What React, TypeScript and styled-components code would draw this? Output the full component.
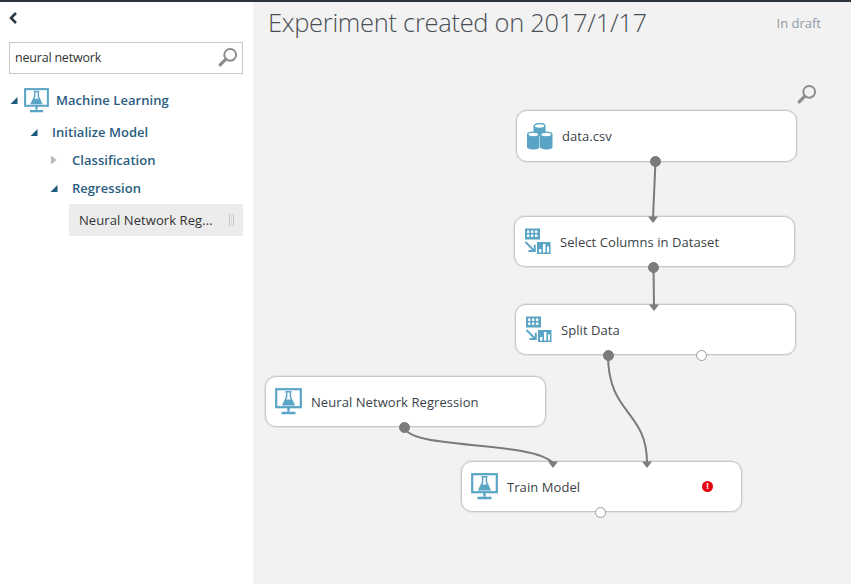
import React from "react";
import styled, { createGlobalStyle } from "styled-components";

const Global = createGlobalStyle`
  html, body { margin: 0; padding: 0; height: 100%; background: #fff; }
  #root { height: 100%; }
  * { box-sizing: border-box; }
`;

const FONT = `"Open Sans", "Noto Sans", "Liberation Sans", sans-serif`;
const BLUE = "#5aa5c6";

const Page = styled.div`
  width: 851px;
  height: 584px;
  display: flex;
  flex-direction: column;
  overflow: hidden;
  font-family: ${FONT};
`;
const TopBar = styled.div`
  height: 2px;
  flex: none;
  background: #2e343e;
`;
const Body = styled.div`
  flex: 1;
  display: flex;
  min-height: 0;
`;
const Sidebar = styled.aside`
  width: 253px;
  flex: none;
  background: #fff;
  padding: 8px 10px 0 8px;
  display: flex;
  flex-direction: column;
`;
const Back = styled.div`
  height: 32px;
  display: flex;
  align-items: flex-start;
  padding: 1px 0 0 0;
`;
const Search = styled.div`
  height: 32px;
  margin-left: 1px;
  border: 1px solid #c8c8c8;
  display: flex;
  align-items: center;
  justify-content: space-between;
  padding: 0 4px 2px 5px;
  font-size: 12.5px;
  color: #333;
  letter-spacing: -0.2px;
`;
const Tree = styled.div`
  margin-top: 9px;
  margin-left: 1px;
  display: flex;
  flex-direction: column;
`;
const TreeRow = styled.div<{ $indent: number; $h: number }>`
  height: ${(p) => p.$h}px;
  display: flex;
  align-items: center;
  padding-left: ${(p) => p.$indent}px;
  color: #2a5d7f;
  font-size: 13px;
  font-weight: 600;
  letter-spacing: 0.04px;
`;
const Twist = styled.svg`
  width: 8px;
  height: 10px;
  flex: none;
`;
const RowLabel = styled.span<{ $gap: number }>`
  margin-left: ${(p) => p.$gap}px;
`;
const RowIcon = styled.span`
  margin-left: 6px;
  display: flex;
  line-height: 0;
`;
const Leaf = styled.div`
  height: 32px;
  margin: 1px 0 0 60px;
  background: #ececec;
  display: flex;
  align-items: center;
  justify-content: space-between;
  padding: 0 9px 0 10px;
  color: #333;
  font-size: 13px;
  letter-spacing: 0.08px;
`;
const Grip = styled.div`
  width: 5px;
  height: 12px;
  border-left: 1px solid #c4c4c4;
  border-right: 1px solid #c4c4c4;
  position: relative;
  &::after {
    content: "";
    position: absolute;
    left: 1px;
    top: 0;
    bottom: 0;
    width: 1px;
    background: #dcdcdc;
  }
`;
const Canvas = styled.main`
  flex: 1;
  position: relative;
  background: #f2f2f2;
  border-left: 1px solid #f7f7f7;
`;
const Header = styled.header`
  display: flex;
  justify-content: space-between;
  align-items: flex-start;
  padding: 1px 30px 0 14px;
`;
const Title = styled.h1`
  margin: 0;
  font-size: 25.5px;
  line-height: 38px;
  font-weight: 300;
  color: #4a4f55;
  letter-spacing: -0.3px;
`;
const Status = styled.div`
  font-size: 13px;
  line-height: 18px;
  margin-top: 11px;
  color: #8f9aa6;
  letter-spacing: 0;
`;
const ZoomIcon = styled.div`
  position: absolute;
  left: 543px;
  top: 82px;
  line-height: 0;
`;
const Wires = styled.svg`
  position: absolute;
  left: -254px;
  top: -2px;
  width: 851px;
  height: 584px;
  pointer-events: none;
`;
const Node = styled.div<{ $x: number; $y: number; $h: number }>`
  position: absolute;
  left: ${(p) => p.$x - 254}px;
  top: ${(p) => p.$y - 2}px;
  width: 281px;
  height: ${(p) => p.$h}px;
  background: #fff;
  border: 1px solid #c8c8c8;
  box-shadow: 0 0 0 1px rgba(200, 200, 200, 0.35);
  border-radius: 11px;
  display: flex;
  align-items: center;
  padding-left: 9px;
  font-size: 13px;
  color: #3a3f47;
  letter-spacing: 0.07px;
`;
const NodeIcon = styled.div`
  width: 27px;
  height: 27px;
  flex: none;
  line-height: 0;
`;
const NodeLabel = styled.span<{ $gap: number }>`
  margin-left: ${(p) => p.$gap}px;
`;
const Port = styled.div<{ $x: number; $y: number; $open?: boolean }>`
  position: absolute;
  left: ${(p) => p.$x - 254 - 5.5}px;
  top: ${(p) => p.$y - 2 - 5.5}px;
  width: 11px;
  height: 11px;
  border-radius: 50%;
  background: ${(p) => (p.$open ? "#fff" : "#7b7b7b")};
  border: 1px solid ${(p) => (p.$open ? "#9a9a9a" : "#7b7b7b")};
`;
const Alert = styled.div`
  position: absolute;
  left: 240px;
  top: 19px;
  width: 11px;
  height: 11px;
  border-radius: 50%;
  background: #e60012;
  color: #fff;
  font: 700 9px/11px "Liberation Sans", sans-serif;
  text-align: center;
`;

const Magnifier = ({ size, color }: { size: number; color: string }) => (
  <svg width={size} height={size} viewBox="0 0 20 20" fill="none">
    <circle cx="12.2" cy="7.8" r="5.9" stroke={color} strokeWidth="2" />
    <path d="M7.6 12.4 2.2 17.8" stroke={color} strokeWidth="3.2" strokeLinecap="round" />
  </svg>
);

const Open = () => (
  <Twist viewBox="0 0 8 10">
    <path d="M7.5 2v7H.5z" fill="#1f5b7e" />
  </Twist>
);
const Closed = () => (
  <Twist viewBox="0 0 8 10">
    <path d="M1 .5 6.5 5 1 9.5z" fill="#b9b9b9" />
  </Twist>
);

const Flask = ({ size = 27 }: { size?: number }) => (
  <svg width={size} height={size} viewBox="0 0 27 27" fill="none">
    <rect x="1.2" y="1.2" width="24.6" height="18" stroke={BLUE} strokeWidth="2.2" />
    <path d="M13.5 19v4.5M6.5 25h14" stroke={BLUE} strokeWidth="2.4" />
    <path d="M10.5 3.8h6M11.6 4v5L8 16.8h11L15.4 9V4" stroke={BLUE} strokeWidth="1.5" />
    <path d="M10.6 11.5h5.8l2.2 5.3H8.4z" fill={BLUE} />
  </svg>
);

const Cyl = ({ x, y, w, h }: { x: number; y: number; w: number; h: number }) => (
  <g>
    <path
      d={`M${x} ${y + 2.5}v${h - 5}c0 1.6 2.5 2.5 ${w / 2} 2.5s${w / 2}-.9 ${w / 2}-2.5V${y + 2.5}z`}
      fill={BLUE}
    />
    <ellipse cx={x + w / 2} cy={y + 2.5} rx={w / 2 - 0.7} ry="2.4" fill="#fff" stroke={BLUE} strokeWidth="1.4" />
  </g>
);
const Database = () => (
  <svg width="27" height="27" viewBox="0 0 27 27">
    <Cyl x={7.5} y={0.5} w={12} h={12} />
    <Cyl x={1} y={9} w={12.5} h={17.5} />
    <Cyl x={14} y={9} w={12.5} h={17.5} />
  </svg>
);

const Transform = () => (
  <svg width="27" height="27" viewBox="0 0 27 27" fill="none">
    <rect x="1" y="0.5" width="15" height="11" fill={BLUE} />
    <g fill="#fff">
      {[3, 7, 11].flatMap((x) => [2.5, 6.5].map((y) => <rect key={`${x}-${y}`} x={x} y={y} width="2.4" height="2.4" />))}
    </g>
    <rect x="13" y="14" width="13.5" height="12" fill={BLUE} />
    <g fill="#fff">
      <rect x="15" y="21" width="2.4" height="3.5" />
      <rect x="19" y="16" width="2.4" height="8.5" />
      <rect x="23" y="18.5" width="2" height="6" />
    </g>
    <path d="M1.5 14 10 22.5M4.5 23h6.3v-6.3" stroke={BLUE} strokeWidth="1.9" />
  </svg>
);

const Arrow = ({ x, y }: { x: number; y: number }) => (
  <path d={`M${x - 5} ${y - 4.5}h10L${x} ${y + 2}z`} fill="#7b7b7b" />
);

export default function App() {
  return (
    <Page>
      <Global />
      <TopBar />
      <Body>
        <Sidebar>
          <Back>
            <svg width="11" height="14" viewBox="0 0 11 14" fill="none">
              <path d="M8 2 3 7l5 5" stroke="#2c3a45" strokeWidth="2.6" />
            </svg>
          </Back>
          <Search>
            neural network
            <Magnifier size={20} color="#8d8d8d" />
          </Search>
          <Tree>
            <TreeRow $indent={1} $h={34}>
              <Open />
              <RowIcon>
                <Flask size={25} />
              </RowIcon>
              <RowLabel $gap={7}>Machine Learning</RowLabel>
            </TreeRow>
            <TreeRow $indent={21} $h={30}>
              <Open />
              <RowLabel $gap={14}>Initialize Model</RowLabel>
            </TreeRow>
            <TreeRow $indent={41} $h={26}>
              <Closed />
              <RowLabel $gap={14}>Classification</RowLabel>
            </TreeRow>
            <TreeRow $indent={41} $h={30}>
              <Open />
              <RowLabel $gap={14}>Regression</RowLabel>
            </TreeRow>
            <Leaf>
              Neural Network Reg...
              <Grip />
            </Leaf>
          </Tree>
        </Sidebar>
        <Canvas>
          <Header>
            <Title>Experiment created on 2017/1/17</Title>
            <Status>In draft</Status>
          </Header>
          <ZoomIcon>
            <Magnifier size={20} color="#8d8d8d" />
          </ZoomIcon>
          <Node $x={516} $y={110} $h={52}>
            <NodeIcon>
              <Database />
            </NodeIcon>
            <NodeLabel $gap={9}>data.csv</NodeLabel>
          </Node>
          <Node $x={514} $y={216} $h={51}>
            <NodeIcon>
              <Transform />
            </NodeIcon>
            <NodeLabel $gap={9}>Select Columns in Dataset</NodeLabel>
          </Node>
          <Node $x={515} $y={304} $h={51}>
            <NodeIcon>
              <Transform />
            </NodeIcon>
            <NodeLabel $gap={9}>Split Data</NodeLabel>
          </Node>
          <Node $x={265} $y={376} $h={51}>
            <NodeIcon>
              <Flask />
            </NodeIcon>
            <NodeLabel $gap={9}>Neural Network Regression</NodeLabel>
          </Node>
          <Node $x={461} $y={461} $h={51}>
            <NodeIcon>
              <Flask />
            </NodeIcon>
            <NodeLabel $gap={9}>Train Model</NodeLabel>
            <Alert>!</Alert>
          </Node>
          <Wires viewBox="0 0 851 584" fill="none">
            <g stroke="#7b7b7b" strokeWidth="2">
              <path d="M655.5 161 653 218" />
              <path d="M653.5 267 654 306" />
              <path d="M608 355C608 415 647 410 647 463" />
              <path d="M404 427C410 450 530 440 553 463" />
            </g>
            <Arrow x={653} y={221} />
            <Arrow x={654} y={309} />
            <Arrow x={553} y={466} />
            <Arrow x={647} y={466} />
          </Wires>
          <Port $x={655.5} $y={161} />
          <Port $x={653.5} $y={267} />
          <Port $x={608} $y={355} />
          <Port $x={701} $y={355} $open />
          <Port $x={404} $y={427} />
          <Port $x={600} $y={512} $open />
        </Canvas>
      </Body>
    </Page>
  );
}
